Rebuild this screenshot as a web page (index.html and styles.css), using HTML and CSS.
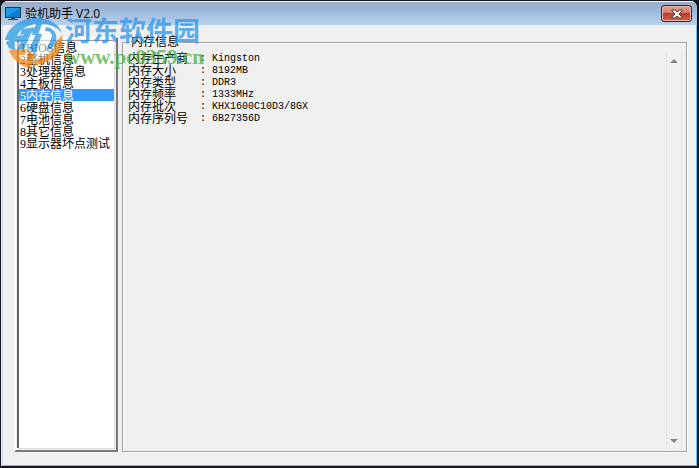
FILE: index.html
```html
<!DOCTYPE html>
<html lang="zh-CN">
<head>
    <meta charset="UTF-8">
    <meta name="viewport" content="width=device-width, initial-scale=1.0">
    <title>验机助手 V2.0</title>
    <link rel="stylesheet" href="styles.css">
</head>
<body>
    <div class="window">
        <header class="titlebar">
            <svg class="app-icon" width="16" height="14" viewBox="0 0 16 14">
                <rect x="0.5" y="0.5" width="15" height="10" fill="#1b9be8" stroke="#173a5a"/>
                <path d="M1 10L15 1V10Z" fill="#0f7fd0"/>
                <path d="M6 11H10V12H13V13H3V12H6Z" fill="#33485c"/>
            </svg>
            <h1>验机助手 V2.0</h1>
            <button class="close" type="button" aria-label="关闭">
                <svg width="12" height="10" viewBox="0 0 12 10">
                    <path d="M1 1H4L6 3L8 1H11V2L8 5L11 8V9H8L6 7L4 9H1V8L4 5L1 2Z" fill="#fff" stroke="#5b3434"/>
                </svg>
            </button>
        </header>

        <main class="content">
            <div class="list-frame">
                <select class="list" size="9" aria-label="信息类别">
                    <option>1BIOS信息</option>
                    <option>2整机信息</option>
                    <option>3处理器信息</option>
                    <option>4主板信息</option>
                    <option selected>5内存信息</option>
                    <option>6硬盘信息</option>
                    <option>7电池信息</option>
                    <option>8其它信息</option>
                    <option>9显示器坏点测试</option>
                </select>
            </div>

            <fieldset class="details">
                <legend>内存信息</legend>
                <div class="pane">
                    <table>
                        <tr><th scope="row">内存生产商</th><td>: Kingston</td></tr>
                        <tr><th scope="row">内存大小</th><td>: 8192MB</td></tr>
                        <tr><th scope="row">内存类型</th><td>: DDR3</td></tr>
                        <tr><th scope="row">内存频率</th><td>: 1333MHz</td></tr>
                        <tr><th scope="row">内存批次</th><td>: KHX1600C10D3/8GX</td></tr>
                        <tr><th scope="row">内存序列号</th><td>: 6B27356D</td></tr>
                    </table>
                    <div class="scrollbar">
                        <button type="button" aria-label="向上滚动">
                            <svg width="8" height="4" viewBox="0 0 8 4"><path d="M0 4L4 0L8 4Z" fill="#858585"/></svg>
                        </button>
                        <button type="button" aria-label="向下滚动">
                            <svg width="8" height="4" viewBox="0 0 8 4"><path d="M0 0L4 4L8 0Z" fill="#858585"/></svg>
                        </button>
                    </div>
                </div>
            </fieldset>
        </main>
    </div>

    <div class="watermark">
        <svg class="mark" width="60" height="54" viewBox="0 0 60 54">
            <path d="M4 24C10 10 22 4 34 5C46 6 54 16 52 28C50 40 40 47 27 47L14 44Z" fill="#fff" opacity="0.75"/>
            <path d="M0 24C3 11 16 2 31 2C44 2 54 8 57 17C52 11 44 8 37 8L33 19H27L31 8C23 9 15 13 12 20L20 19L17 26H10C9 30 10 33 12 36L4 32C2 29 3 26 4 24Z" fill="#2a9be6"/>
            <path d="M17 13L33 11L31 16L26 17L19 34H12L19 18L15 19Z" fill="#2a9be6"/>
            <path d="M31 18H37L30 38L24 33Z" fill="#2a9be6"/>
            <path d="M41 11C49 12 53 18 51 26L47 32L41 35L47 20C47 17 45 15 40 15Z" fill="#2a9be6"/>
            <path d="M57 19C60 33 50 46 34 48L27 52L30 44C41 42 49 35 50 27Z" fill="#f58a1f"/>
            <path d="M4 34L22 33L20 39H13C15 43 19 44 24 44L23 52C14 49 7 43 4 34Z" fill="#f58a1f"/>
            <path d="M23 34L30 39L25 53L21 50Z" fill="#f58a1f"/>
            <circle cx="3" cy="27" r="2" fill="#2a9be6"/>
        </svg>
        <div class="mark-text">
            <strong>河东软件园</strong>
            <span>www.pc0359.cn</span>
        </div>
    </div>
</body>
</html>
```

FILE: styles.css
```css
* {
    box-sizing: border-box;
}
body {
    margin: 0;
    height: 100vh;
    background-color: #15151f;
    font-family: "Liberation Serif", "Noto Sans CJK SC", serif;
    font-size: 12px;
    color: #000;
    overflow: hidden;
}
.window {
    display: flex;
    flex-direction: column;
    height: 100vh;
    border: 1px solid #15151f;
    border-right-width: 2px;
    border-bottom-width: 2px;
    border-radius: 8px 8px 0 0;
    background-color: #f0f0f0;
    box-shadow: inset 1px 1px #e8f0f8, inset -1px -1px #65c8e8, inset 2px 0 #c5d4e8;
    overflow: hidden;
}
.titlebar {
    display: flex;
    align-items: center;
    height: 24px;
    padding: 0 5px 0 4px;
    border-top: 1px solid #f4f7fb;
    background: linear-gradient(#9cadc6, #9bb5d5 30%, #b7d1ed);
}
.titlebar h1 {
    flex: 1;
    margin: 0 0 0 4px;
    font-family: "Open Sans", "Noto Sans CJK SC", sans-serif;
    font-size: 12px;
    font-weight: 400;
    line-height: 20px;
}
.close {
    display: flex;
    align-items: center;
    justify-content: center;
    width: 31px;
    height: 17px;
    padding: 0;
    border: 1px solid #4d1f24;
    border-radius: 3px;
    background: linear-gradient(#e3a294, #d47b69 45%, #bd3c25 50%, #d26348);
    box-shadow: inset 0 0 0 1px #e8b5a8;
}
.content {
    flex: 1;
    display: flex;
    gap: 4px;
    min-height: 0;
    padding: 11px 10px 14px 13px;
}
.list-frame {
    flex: none;
    display: flex;
    width: 104px;
    margin-top: 1px;
    padding: 1px 2px 2px 1px;
    border: 2px solid #fff;
    border-right-color: #777;
    border-bottom-color: #777;
    background-color: #f0f0f0;
}
.list {
    width: 100%;
    height: 100%;
    padding: 0;
    border: 0 solid #666;
    border-left-width: 2px;
    border-top: 1px solid #999;
    border-radius: 0;
    outline: none;
    background-color: #fff;
    box-shadow: 1px 1px #ddd;
    font: inherit;
    color: #000;
    overflow: hidden;
}
.list option {
    display: flex;
    align-items: center;
    height: 12px;
    min-height: 12px;
    padding: 0 1px;
}
.list option:checked {
    background: linear-gradient(#3399ff, #3399ff);
    color: #fff;
}
.details {
    flex: 1;
    display: flex;
    min-width: 0;
    margin: 0;
    padding: 0 4px 2px 5px;
    border: 1px solid #a0a0a0;
    box-shadow: inset 1px 1px #fff, 1px 1px #fff;
}
.details legend {
    margin-left: 2px;
    padding: 0 1px;
    line-height: 12px;
}
.pane {
    flex: 1;
    display: flex;
    justify-content: space-between;
    height: 100%;
    padding-top: 5px;
}
table {
    align-self: flex-start;
    border-collapse: collapse;
}
th,
td {
    height: 12px;
    padding: 0;
    font-weight: 400;
    line-height: 12px;
    text-align: left;
    white-space: nowrap;
}
th {
    width: 72px;
}
td {
    font-family: "Liberation Mono", monospace;
    font-size: 10px;
}
.scrollbar {
    display: flex;
    flex-direction: column;
    justify-content: space-between;
    width: 16px;
    border: solid #e3e3e3;
    border-width: 0 1px;
}
.scrollbar button {
    display: flex;
    align-items: center;
    justify-content: center;
    height: 16px;
    padding: 0;
    border: 0;
    background: none;
}

/* site stamp lying over the top left corner */
.watermark {
    position: absolute;
    top: 16px;
    left: 5px;
    display: flex;
    opacity: 0.75;
    pointer-events: none;
}
.mark-text {
    display: flex;
    flex-direction: column;
}
.mark-text strong {
    font-family: "Noto Sans CJK SC", sans-serif;
    font-size: 27px;
    font-weight: 700;
    line-height: 28px;
    color: #2a96ec;
}
.mark-text span {
    font-size: 21px;
    font-weight: 700;
    line-height: 26px;
    color: #4caf3c;
}
```
